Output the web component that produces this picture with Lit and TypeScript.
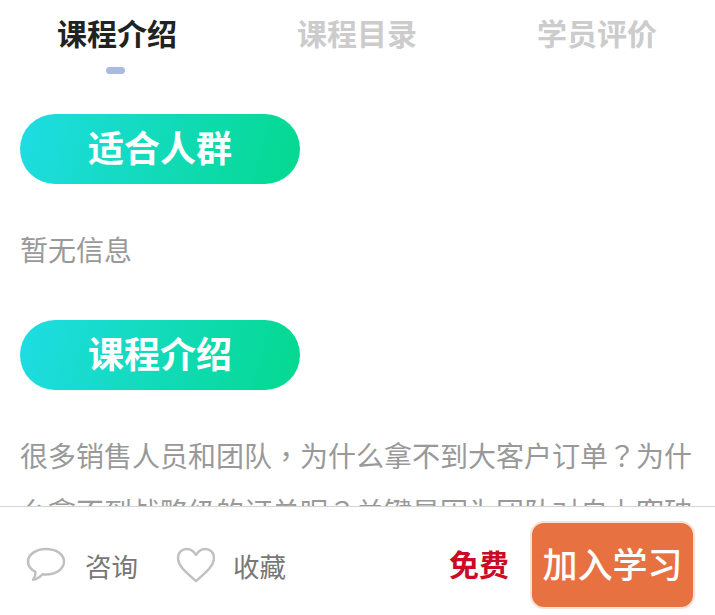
import { LitElement, html, css } from "lit";
import { customElement } from "lit/decorators.js";

@customElement("app-root")
export class AppRoot extends LitElement {
  static styles = css`
    :host {
      display: block;
      position: relative;
      width: 715px;
      height: 615px;
      overflow: hidden;
      background: #fff;
      font-family: "Noto Sans CJK SC", "Noto Sans", sans-serif;
    }
    .tabs {
      display: grid;
      grid-template-columns: repeat(3, 240px);
      margin-left: -3px;
      height: 74px;
    }
    .tab {
      display: flex;
      flex-direction: column;
      align-items: center;
      font-size: 30px;
      font-weight: 700;
      line-height: 44px;
      padding-top: 10px;
      color: #ccc;
    }
    .tab.active { color: #222; }
    .bar {
      width: 19px;
      height: 7px;
      border-radius: 4px;
      background: #a9bcdf;
      margin: 13px 4px 0 0;
    }
    .content { padding: 40px 20px 0; }
    .pill {
      width: 280px;
      height: 70px;
      box-sizing: border-box;
      padding-bottom: 7px;
      border-radius: 35px;
      background: linear-gradient(105deg, #1fdce4, #04d98e);
      color: #fff;
      font-size: 36px;
      font-weight: 700;
      display: flex;
      align-items: center;
      justify-content: center;
    }
    p {
      margin: 0;
      font-size: 28px;
      line-height: 56px;
      color: #999;
      width: 675px;
      font-family: "Noto Sans CJK TC", "Noto Sans", sans-serif;
    }
    .none { margin: 37px 0 43px; }
    .intro { margin-top: 37px; }
    .footer {
      position: absolute;
      left: 0;
      right: 0;
      bottom: 0;
      height: 109px;
      background: #fff;
      border-top: 1px solid #d4d4d4;
      display: flex;
      align-items: center;
      box-sizing: border-box;
      padding: 0 20px 0 26px;
    }
    .action {
      display: flex;
      align-items: center;
      font-size: 26.500px;
      color: #777;
      margin-top: 8px;
    }
    .action svg { display: block; margin-right: 19px; }
    .action.first { margin-right: 37px; }
    .action.heart svg { margin-right: 18px; }
    .price {
      margin-left: auto;
      margin-right: 21px;
      font-size: 30px;
      font-weight: 700;
      color: #c90b26;
      margin-top: 4px;
    }
    .join {
      width: 165px;
      height: 88px;
      box-sizing: border-box;
      border: 2px solid #fbe0d4;
      border-radius: 14px;
      background: #e87142;
      color: #fff;
      font-size: 35px;
      font-weight: 500;
      display: flex;
      align-items: center;
      justify-content: center;
      margin-top: 7px;
      padding-bottom: 4px;
    }
  `;

  render() {
    return html`
      <div class="tabs">
        <div class="tab active">课程介绍<span class="bar"></span></div>
        <div class="tab">课程目录</div>
        <div class="tab">学员评价</div>
      </div>
      <div class="content">
        <div class="pill">适合人群</div>
        <p class="none">暂无信息</p>
        <div class="pill">课程介绍</div>
        <p class="intro">很多销售人员和团队，为什么拿不到大客户订单？为什么拿不到战略级的订单呢？关键是因为团队对自上突破</p>
      </div>
      <div class="footer">
        <div class="action first">
          <svg width="40" height="36" viewBox="0 0 40 36" fill="none" stroke="#c0c0c0" stroke-width="2.500">
            <path d="M20 2C10 2 2 7.500 2 14.500c0 4.500 3 8 7.500 10.300.2 2.700-.8 5.700-2.500 8 3.500-.4 7-3 9.500-5.500 1.200.1 2.300.2 3.500.2 10 0 18-5.800 18-13S30 2 20 2z" stroke-linejoin="round"/>
          </svg>
          咨询
        </div>
        <div class="action heart">
          <svg width="40" height="36" viewBox="0 0 40 36" fill="none" stroke="#c0c0c0" stroke-width="2.500">
            <path d="M21 34C13 27 3 19.500 3 11 3 5.500 7 2 11.500 2 15.500 2 19 4.500 21 8c2-3.500 5.500-6 9.500-6C35 2 39 5.500 39 11c0 8.500-10 16-18 23z" stroke-linejoin="round"/>
          </svg>
          收藏
        </div>
        <div class="price">免费</div>
        <div class="join">加入学习</div>
      </div>
    `;
  }
}
